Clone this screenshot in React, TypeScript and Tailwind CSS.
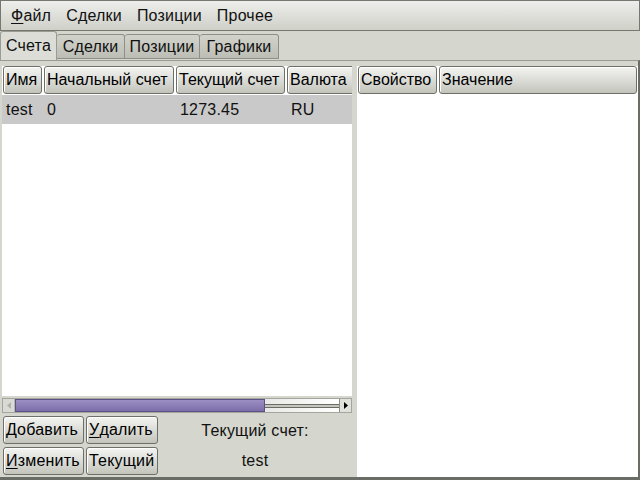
import React from 'react';

const btn =
  'flex items-center border border-[#6d7068] rounded-[3px] bg-gradient-to-b from-[#f4f4f2] to-[#c3c5bc] shadow-[inset_1px_1px_0_#fff] text-black';

function HeaderCell({ label, className }: { label: string; className: string }) {
  return <div className={`${btn} h-[28px] px-[2px] overflow-hidden whitespace-nowrap tracking-normal ${className}`}>{label}</div>;
}

function Button({ first, rest }: { first: string; rest: string }) {
  return (
    <div className={`${btn} h-[28px] px-[2px] whitespace-nowrap overflow-hidden`}>
      {first && <span className="underline underline-offset-2">{first}</span>}
      {rest}
    </div>
  );
}

const tabs = [
  { label: 'Сделки', w: 'w-[68px]' },
  { label: 'Позиции', w: 'w-[75px]' },
  { label: 'Графики', w: 'w-[79px]' },
];

export default function App() {
  return (
    <div
      className="w-[640px] h-[480px] bg-[#d5d6ce] flex flex-col text-[16px] tracking-[0.2px] text-[#111] overflow-hidden"
      style={{ fontFamily: '"Liberation Sans", Arial, sans-serif' }}
    >
      {/* Menu bar */}
      <div className="h-[31px] flex items-center gap-[15px] px-[10px] border border-[#75786f] bg-gradient-to-b from-[#eeeeec] to-[#cfd0c8]">
        <span>
          <span className="underline underline-offset-2">Ф</span>айл
        </span>
        <span>Сделки</span>
        <span>Позиции</span>
        <span>Прочее</span>
      </div>

      {/* Tabs */}
      <div className="h-[29px] flex items-end">
        <div className="w-[57px] h-[29px] flex items-center justify-center border border-b-0 border-[#9a9c94] rounded-t-[3px] bg-[#dcddd6]">Счета</div>
        {tabs.map((t) => (
          <div key={t.label} className={`${t.w} h-[25px] mb-[1px] flex items-center justify-center border border-l-0 border-[#8d9087] rounded-t-[3px] bg-gradient-to-b from-[#d2d3cb] to-[#bcbeb5]`}>
            {t.label}
          </div>
        ))}
      </div>

      {/* Content */}
      <div className="flex-1 flex border-t border-[#9a9c94] border-r-2 border-r-[#6a6d65] border-b-[3px] border-b-[#6a6d65] pt-[5px] pl-[2px]">
        {/* Left pane */}
        <div className="w-[350px] flex flex-col">
          <div className="flex-1 bg-white flex flex-col overflow-hidden">
            <div className="flex gap-[2px] pl-[1px] h-[29px]">
              <HeaderCell label="Имя" className="w-[39px] shrink-0" />
              <HeaderCell label="Начальный счет" className="w-[130px] shrink-0" />
              <HeaderCell label="Текущий счет" className="w-[109px] shrink-0" />
              <HeaderCell label="Валюта" className="w-[70px] shrink-0" />
            </div>
            <div className="h-[29px] bg-[#c9c9c9] flex items-center">
              <span className="w-[45px] pl-[4px]">test</span>
              <span className="w-[133px]">0</span>
              <span className="w-[111px]">1273.45</span>
              <span>RU</span>
            </div>
          </div>
          {/* Scrollbar */}
          <div className="h-[15px] mt-[2px] flex items-center border border-[#a4a69e] bg-[#e6e6e2]">
            <div className="w-[12px] h-[13px] flex items-center justify-center bg-[#d9dad3] border-r border-[#b5b7af]">
              <svg width="6" height="7" viewBox="0 0 6 7"><path d="M5 0 L1 3.5 L5 7 Z" fill="#b0b2aa" /></svg>
            </div>
            <div className="w-[250px] h-[13px] bg-gradient-to-b from-[#9c8fc4] to-[#7c6ea9] border border-[#5e5284]" />
            <div className="flex-1 h-[13px] flex flex-col justify-center bg-gradient-to-r from-[#e8e8e6] to-[#ffffff]">
              <div className="h-[4px] border-y border-[#6a6d65] bg-[#c4c6be]" />
            </div>
            <div className="w-[12px] h-[13px] flex items-center justify-center bg-[#e0e1da] border-l border-[#8a8c84]">
              <svg width="6" height="7" viewBox="0 0 6 7"><path d="M1 0 L5 3.5 L1 7 Z" fill="#000" /></svg>
            </div>
          </div>
          {/* Buttons */}
          <div className="flex mt-[3px] pl-[1px] pb-[1px]">
            <div className="grid grid-cols-[81px_72px] gap-x-[2px] gap-y-[2px]">
              <Button first="Д" rest="обавить" />
              <Button first="У" rest="далить" />
              <Button first="И" rest="зменить" />
              <Button first="" rest="Текущий" />
            </div>
            <div className="flex-1 flex flex-col">
              <div className="h-[30px] flex items-center justify-center">Текущий счет:</div>
              <div className="h-[30px] flex items-center justify-center">test</div>
            </div>
          </div>
        </div>
        {/* Splitter */}
        <div className="w-[5px] bg-[#d5d6ce]" />
        {/* Right pane */}
        <div className="flex-1 bg-white flex flex-col">
          <div className="flex gap-[2px] pl-[1px] h-[29px] pr-[1px]">
            <HeaderCell label="Свойство" className="w-[79px] shrink-0" />
            <HeaderCell label="Значение" className="flex-1" />
          </div>
        </div>
      </div>
    </div>
  );
}
